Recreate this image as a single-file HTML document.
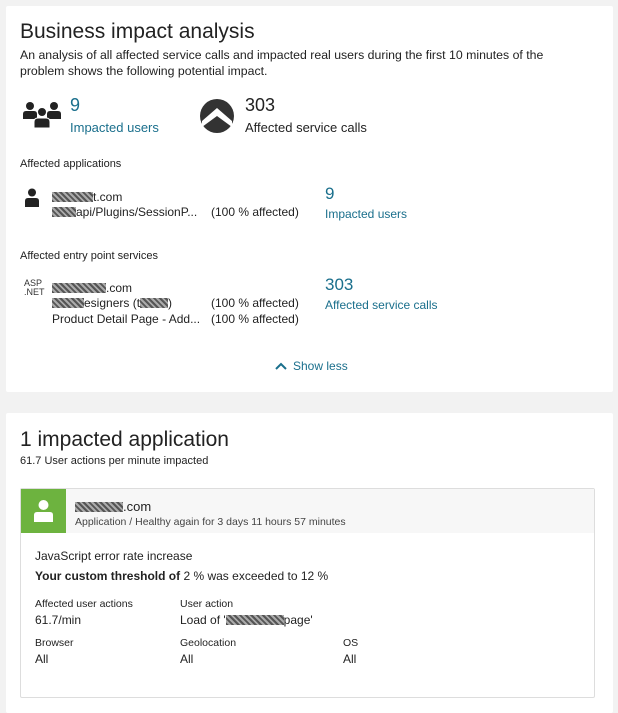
<!DOCTYPE html>
<html><head><meta charset="utf-8">
<style>
*{margin:0;padding:0;box-sizing:border-box}
body{width:618px;height:710px;background:#f2f2f2;font-family:"Liberation Sans",sans-serif;color:#222;position:relative;overflow:hidden;font-size:12px}
.card{position:absolute;left:6px;width:607px;background:#fff;border-radius:2px}
.a{position:absolute;white-space:nowrap}
.blue{color:#1a6f8c}
.bl{display:inline-block;height:10px;background:repeating-linear-gradient(45deg,#555 0 2px,#aaa 2px 4px);vertical-align:-1px}
h1{font-weight:normal;font-size:21px;color:#222}
</style></head><body>
<div class="card" style="top:6px;height:386px"></div>
<div class="card" style="top:413px;height:300px"></div>

<div class="a" style="left:20px;top:20px"><h1>Business impact analysis</h1></div>
<div class="a" style="left:20px;top:47px;line-height:16px;font-size:12.3px">An analysis of all affected service calls and impacted real users during the first 10 minutes of the<br>problem shows the following potential impact.</div>

<svg class="a" style="left:23px;top:101px" width="40" height="30" viewBox="0 0 40 30">
<g fill="#222"><circle cx="7" cy="5" r="4"/><circle cx="31" cy="5" r="4"/><path d="M0 18v-5q0-3 3-3h8q3 0 3 3v5z"/><path d="M24 18v-5q0-3 3-3h8q3 0 3 3v5z"/><circle cx="19" cy="11" r="4.5" stroke="#fff" stroke-width="1"/><path d="M11 27v-6q0-4 4-4h8q4 0 4 4v6z" stroke="#fff" stroke-width="1"/></g></svg>
<div class="a blue" style="left:70px;top:95px;font-size:18px">9</div>
<div class="a blue" style="left:70px;top:120px;font-size:13px">Impacted users</div>

<svg class="a" style="left:199px;top:98px" width="36" height="36" viewBox="0 0 36 36">
<circle cx="18" cy="18" r="17" fill="#333"/><path d="M3 23L18 10L33 23L33 29L18 18L3 29Z" fill="#fff"/></svg>
<div class="a" style="left:245px;top:95px;font-size:18px">303</div>
<div class="a" style="left:245px;top:120px;font-size:13px">Affected service calls</div>

<div class="a" style="left:20px;top:158px;font-size:11px">Affected applications</div>
<svg class="a" style="left:25px;top:188px" width="14" height="19" viewBox="0 0 14 19"><g fill="#222"><circle cx="7" cy="4.5" r="4"/><path d="M0 19v-6q0-3 3-3h8q3 0 3 3v6z"/></g></svg>
<div class="a" style="left:52px;top:190px;font-size:12px"><span class="bl" style="width:41px"></span>t.com</div>
<div class="a" style="left:52px;top:205px;font-size:12px"><span class="bl" style="width:24px"></span>api/Plugins/SessionP...</div>
<div class="a" style="left:211px;top:205px;font-size:12px">(100 % affected)</div>
<div class="a blue" style="left:325px;top:184px;font-size:17px">9</div>
<div class="a blue" style="left:325px;top:207px;font-size:12px">Impacted users</div>

<div class="a" style="left:20px;top:250px;font-size:11px">Affected entry point services</div>
<div class="a" style="left:24px;top:279px;font-size:9px;line-height:9px;color:#333">ASP<br>.NET</div>
<div class="a" style="left:52px;top:281px;font-size:12px"><span class="bl" style="width:54px"></span>.com</div>
<div class="a" style="left:52px;top:296px;font-size:12px"><span class="bl" style="width:32px"></span>esigners (t<span class="bl" style="width:28px"></span>)</div>
<div class="a" style="left:211px;top:296px;font-size:12px">(100 % affected)</div>
<div class="a" style="left:52px;top:312px;font-size:12px">Product Detail Page - Add...</div>
<div class="a" style="left:211px;top:312px;font-size:12px">(100 % affected)</div>
<div class="a blue" style="left:325px;top:275px;font-size:17px">303</div>
<div class="a blue" style="left:325px;top:298px;font-size:12px">Affected service calls</div>

<svg class="a" style="left:275px;top:362px" width="12" height="8" viewBox="0 0 12 8"><path d="M1 7L6 2L11 7" stroke="#1a6f8c" stroke-width="2" fill="none"/></svg>
<div class="a blue" style="left:293px;top:359px;font-size:12px">Show less</div>

<div class="a" style="left:20px;top:428px"><h1>1 impacted application</h1></div>
<div class="a" style="left:20px;top:455px;font-size:11px">61.7 User actions per minute impacted</div>

<div class="a" style="left:20px;top:488px;width:575px;height:210px;border:1px solid #ddd;border-radius:2px;background:#fff"></div>
<div class="a" style="left:21px;top:489px;width:573px;height:44px;background:#f7f7f7"></div>
<div class="a" style="left:21px;top:489px;width:45px;height:44px;background:#6db33f"></div>
<svg class="a" style="left:33px;top:499px" width="21" height="24" viewBox="0 0 21 24"><g fill="#fff"><circle cx="10.5" cy="6" r="5"/><path d="M1 23v-7q0-3 3-3h13q3 0 3 3v7z"/></g></svg>
<div class="a" style="left:75px;top:499px;font-size:13px"><span class="bl" style="width:48px"></span>.com</div>
<div class="a" style="left:75px;top:516px;font-size:10.5px;color:#444">Application / Healthy again for 3 days 11 hours 57 minutes</div>

<div class="a" style="left:35px;top:549px;font-size:12px">JavaScript error rate increase</div>
<div class="a" style="left:35px;top:569px;font-size:12px"><b>Your custom threshold of</b> 2 % was exceeded to 12 %</div>
<div class="a" style="left:35px;top:598px;font-size:10.5px">Affected user actions</div>
<div class="a" style="left:35px;top:613px;font-size:12px">61.7/min</div>
<div class="a" style="left:180px;top:598px;font-size:10.5px">User action</div>
<div class="a" style="left:180px;top:613px;font-size:12px">Load of '<span class="bl" style="width:58px"></span>page'</div>
<div class="a" style="left:35px;top:637px;font-size:10.5px">Browser</div>
<div class="a" style="left:35px;top:652px;font-size:12px">All</div>
<div class="a" style="left:180px;top:637px;font-size:10.5px">Geolocation</div>
<div class="a" style="left:180px;top:652px;font-size:12px">All</div>
<div class="a" style="left:343px;top:637px;font-size:10.5px">OS</div>
<div class="a" style="left:343px;top:652px;font-size:12px">All</div>
</body></html>
